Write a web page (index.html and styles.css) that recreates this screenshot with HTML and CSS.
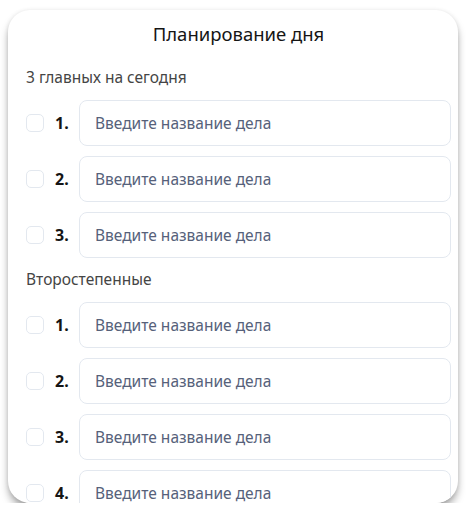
FILE: index.html
```html
<!DOCTYPE html>
<html lang="ru">
<head>
<meta charset="utf-8">
<link rel="stylesheet" href="styles.css">
</head>
<body>
<div class="card">
  <h1 class="title">Планирование дня</h1>
  <section class="section">
    <div class="label">3 главных на сегодня</div>
    <div class="rows">
      <div class="row"><span class="check"></span><span class="num">1.</span><input class="field" placeholder="Введите название дела"></div>
      <div class="row"><span class="check"></span><span class="num">2.</span><input class="field" placeholder="Введите название дела"></div>
      <div class="row"><span class="check"></span><span class="num">3.</span><input class="field" placeholder="Введите название дела"></div>
    </div>
  </section>
  <section class="section">
    <div class="label">Второстепенные</div>
    <div class="rows">
      <div class="row"><span class="check"></span><span class="num">1.</span><input class="field" placeholder="Введите название дела"></div>
      <div class="row"><span class="check"></span><span class="num">2.</span><input class="field" placeholder="Введите название дела"></div>
      <div class="row"><span class="check"></span><span class="num">3.</span><input class="field" placeholder="Введите название дела"></div>
      <div class="row"><span class="check"></span><span class="num">4.</span><input class="field" placeholder="Введите название дела"></div>
    </div>
  </section>
</div>
</body>
</html>
```
FILE: styles.css
```css
* { box-sizing: border-box; }
html, body { margin: 0; padding: 0; background: #fff; }
body {
  font-family: "Noto Sans", "Open Sans", sans-serif;
  padding: 10px 8px 0 8px;
}
.card {
  width: 450px;
  height: 493px;
  border-radius: 22px;
  background: #fff;
  box-shadow: 0 6px 9px -1px rgba(0,0,0,0.38), 0 0 4px rgba(0,0,0,0.08);
  overflow: hidden;
  padding: 12px 7px 0 18px;
}
.title {
  margin: 0;
  font-size: 18.5px;
  line-height: 24px;
  font-weight: 400;
  color: #151515;
  text-align: center;
}
.section { margin-top: 21px; }
.section + .section { margin-top: 11px; }
.label {
  font-size: 15.5px;
  line-height: 20px;
  color: #454545;
  margin-bottom: 13px;
}
.rows { display: flex; flex-direction: column; gap: 10px; }
.row { display: flex; align-items: center; }
.check {
  width: 18px; height: 18px;
  border: 1px solid #e3e8ef;
  border-radius: 5px;
  margin-right: 11px;
  flex: none;
}
.num {
  width: 24px;
  font-size: 16px;
  font-weight: 700;
  color: #151515;
  flex: none;
}
.field {
  flex: 1;
  height: 46px;
  border: 1px solid #e3e8ef;
  border-radius: 8px;
  padding: 0 15px;
  font-family: inherit;
  font-size: 15.5px;
  color: #1f2937;
  background: #fff;
  outline: none;
}
.field::placeholder { color: #56617a; opacity: 1; }
```
